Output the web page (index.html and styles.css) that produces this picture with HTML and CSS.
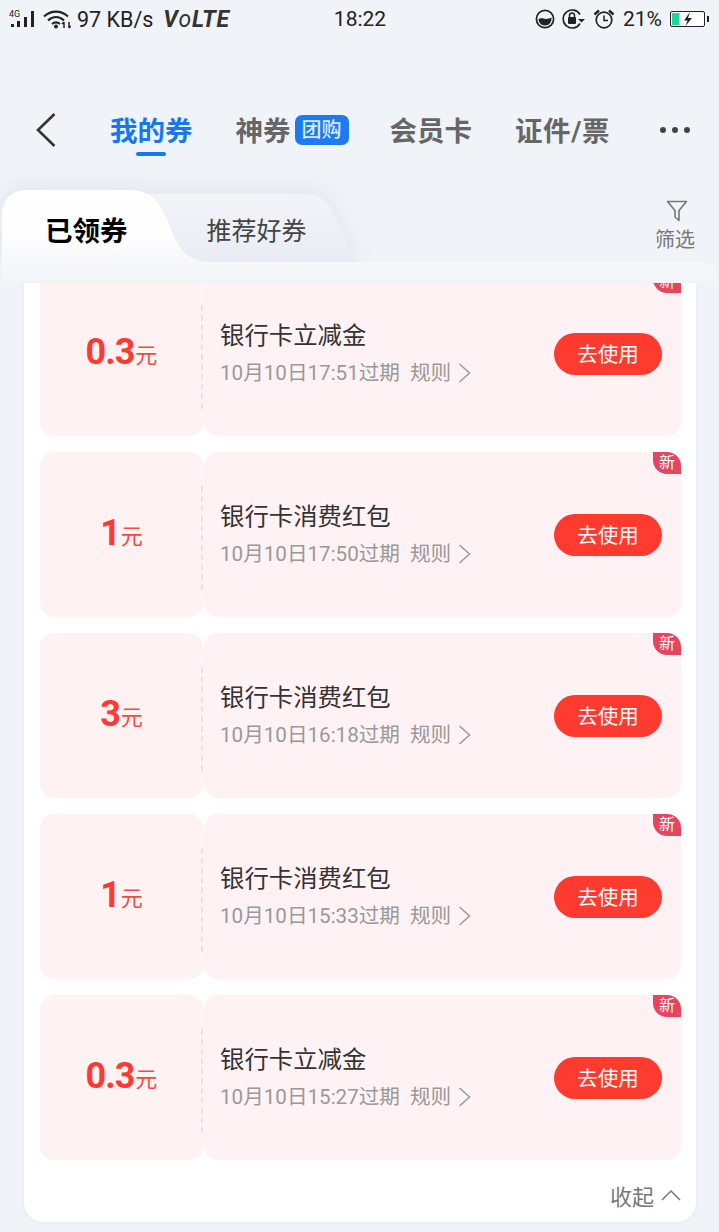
FILE: index.html
```html
<!DOCTYPE html>
<html lang="zh-CN">
<head>
<meta charset="utf-8">
<title>我的券</title>
<link rel="stylesheet" href="styles.css">
</head>
<body>
<div class="page">
  <header class="status">
    <div class="status-left">
      <svg class="ic-signal" width="28" height="20" viewBox="0 0 28 20">
        <text x="0" y="8" class="ic-4g">4G</text>
        <rect x="2" y="15" width="3" height="3"/><rect x="8" y="12" width="3" height="6"/><rect x="15" y="8" width="3" height="10"/><rect x="22" y="2" width="3" height="16"/>
      </svg>
      <svg class="ic-wifi" width="28" height="20" viewBox="0 0 28 20">
        <path d="M1 7.5C8 1 18 1 25 7.5M5 11.5C10 7 16 7 21 11.5M9 15C11.5 13 14.5 13 17 15" fill="none" stroke="#222" stroke-width="2.2"/>
        <circle cx="13" cy="17.5" r="2" fill="#222"/>
        <path d="M21 13v6M19 15l2-2M26 13v6M26 19l2-2" stroke="#222" stroke-width="1.5" fill="none"/>
      </svg>
      <span class="speed">97 KB/s</span>
      <span class="volte">V<span class="volte-o">o</span>LTE</span>
    </div>
    <div class="status-time">18:22</div>
    <div class="status-right">
      <svg width="20" height="20" viewBox="0 0 20 20"><circle cx="10" cy="10" r="8.6" fill="none" stroke="#222" stroke-width="1.7"/><path d="M3.5 10C7 7.5 10 12 16.5 8.5C17 13 14 16.5 10 16.5C6 16.5 3.5 13.5 3.5 10Z" fill="#222"/></svg>
      <svg width="26" height="22" viewBox="0 0 26 22"><path d="M19 15.5A9 9 0 1 1 19 6.5" fill="none" stroke="#222" stroke-width="1.6"/><path d="M17 11h7l-3.5 3.5z" fill="#222"/><rect x="7" y="9" width="8" height="7" rx="1" fill="#222"/><path d="M8.5 9V7.5a2.5 2.5 0 0 1 5 0V9" fill="none" stroke="#222" stroke-width="1.5"/></svg>
      <svg width="22" height="22" viewBox="0 0 22 22"><circle cx="11" cy="12" r="7.8" fill="none" stroke="#222" stroke-width="1.7"/><path d="M11 7.5V12.5H15" fill="none" stroke="#222" stroke-width="1.5"/><path d="M1.5 6.5L6 2.5M20.5 6.5L16 2.5" stroke="#222" stroke-width="2.4"/></svg>
      <span class="battery-pct">21%</span>
      <svg width="40" height="18" viewBox="0 0 40 18"><rect x="0.5" y="1.5" width="34" height="15" rx="1.5" fill="#fff" stroke="#222"/><rect x="2" y="3" width="7.5" height="12" fill="#1fd69a"/><path d="M20 2L14 10.5H17.5L15.5 16L22 8H18Z" fill="#222"/><rect x="37" y="6" width="2" height="6" fill="#222"/></svg>
    </div>
  </header>

  <nav class="nav">
    <svg class="back" width="22" height="36" viewBox="0 0 22 36"><path d="M19.5 2L3 18L19.5 34" fill="none" stroke="#333" stroke-width="2.6"/></svg>
    <div class="nav-item nav-active">我的券</div>
    <div class="nav-item nav-group">神券<span class="nav-badge">团购</span></div>
    <div class="nav-item">会员卡</div>
    <div class="nav-item nav-cert">证件/票</div>
    <div class="nav-more"><i></i><i></i><i></i></div>
  </nav>

  <section class="subtabs">
    <svg class="subtabs-bg" width="400" height="72" viewBox="0 0 400 72">
      <defs>
        <linearGradient id="tabA" x1="0" y1="0" x2="0" y2="1"><stop offset="0" stop-color="#ffffff"/><stop offset="0.7" stop-color="#fdfdfe"/><stop offset="1" stop-color="#f7f8fb"/></linearGradient>
        <linearGradient id="tabB" x1="0" y1="0" x2="0" y2="1"><stop offset="0" stop-color="#f2f4f8"/><stop offset="1" stop-color="#e9ecf3"/></linearGradient>
      </defs>
      <path d="M130 4H306C322 4 329 13 335 26C342 42 348 60 358 72H130Z" fill="url(#tabB)"/>
      <path d="M2 72V26C2 11 10 0 26 0H130C150 0 160 12 168 32C176 52 182 72 212 72Z" fill="url(#tabA)"/>
    </svg>
    <div class="subtab subtab-active">已领券</div>
    <div class="subtab subtab-other">推荐好券</div>
    <div class="filter">
      <svg width="22" height="22" viewBox="0 0 22 22"><path d="M1.5 1.5H20.5L13 10.5V20.5L9 17V10.5Z" fill="none" stroke="#777" stroke-width="1.6" stroke-linejoin="round"/></svg>
      <span>筛选</span>
    </div>
  </section>

  <main class="panel">
    <div class="panel-head"></div>
    <div class="card">
      <div class="list">
        <article class="coupon">
          <div class="coupon-left"><span class="amount">0.3</span><span class="unit">元</span></div>
          <div class="coupon-right">
            <div class="coupon-info"><div class="coupon-title">银行卡立减金</div><div class="coupon-meta"><span>10月10日17:51过期</span><span class="rule">规则</span><svg class="chev" width="13" height="20" viewBox="0 0 13 20"><path d="M1.5 1L11.5 10L1.5 19" fill="none" stroke="#999" stroke-width="1.5"/></svg></div></div>
            <button class="use">去使用</button><span class="new">新</span>
          </div>
        </article>
        <article class="coupon">
          <div class="coupon-left"><span class="amount">1</span><span class="unit">元</span></div>
          <div class="coupon-right">
            <div class="coupon-info"><div class="coupon-title">银行卡消费红包</div><div class="coupon-meta"><span>10月10日17:50过期</span><span class="rule">规则</span><svg class="chev" width="13" height="20" viewBox="0 0 13 20"><path d="M1.5 1L11.5 10L1.5 19" fill="none" stroke="#999" stroke-width="1.5"/></svg></div></div>
            <button class="use">去使用</button><span class="new">新</span>
          </div>
        </article>
        <article class="coupon">
          <div class="coupon-left"><span class="amount">3</span><span class="unit">元</span></div>
          <div class="coupon-right">
            <div class="coupon-info"><div class="coupon-title">银行卡消费红包</div><div class="coupon-meta"><span>10月10日16:18过期</span><span class="rule">规则</span><svg class="chev" width="13" height="20" viewBox="0 0 13 20"><path d="M1.5 1L11.5 10L1.5 19" fill="none" stroke="#999" stroke-width="1.5"/></svg></div></div>
            <button class="use">去使用</button><span class="new">新</span>
          </div>
        </article>
        <article class="coupon">
          <div class="coupon-left"><span class="amount">1</span><span class="unit">元</span></div>
          <div class="coupon-right">
            <div class="coupon-info"><div class="coupon-title">银行卡消费红包</div><div class="coupon-meta"><span>10月10日15:33过期</span><span class="rule">规则</span><svg class="chev" width="13" height="20" viewBox="0 0 13 20"><path d="M1.5 1L11.5 10L1.5 19" fill="none" stroke="#999" stroke-width="1.5"/></svg></div></div>
            <button class="use">去使用</button><span class="new">新</span>
          </div>
        </article>
        <article class="coupon">
          <div class="coupon-left"><span class="amount">0.3</span><span class="unit">元</span></div>
          <div class="coupon-right">
            <div class="coupon-info"><div class="coupon-title">银行卡立减金</div><div class="coupon-meta"><span>10月10日15:27过期</span><span class="rule">规则</span><svg class="chev" width="13" height="20" viewBox="0 0 13 20"><path d="M1.5 1L11.5 10L1.5 19" fill="none" stroke="#999" stroke-width="1.5"/></svg></div></div>
            <button class="use">去使用</button><span class="new">新</span>
          </div>
        </article>
      </div>
      <div class="collapse"><span>收起</span><svg width="20" height="12" viewBox="0 0 20 12"><path d="M1 11L10 2L19 11" fill="none" stroke="#777" stroke-width="1.5"/></svg></div>
    </div>
  </main>
</div>
</body>
</html>
```
FILE: styles.css
```css
* { box-sizing: border-box; }
html, body { margin: 0; padding: 0; }
body {
  width: 719px;
  height: 1232px;
  overflow: hidden;
  background: #f0f3f8;
  font-family: "Roboto", "Noto Sans CJK SC", sans-serif;
}
.page { width: 719px; height: 1232px; overflow: hidden; background: #f0f3f8; }

/* status bar */
.status {
  height: 40px;
  display: flex;
  align-items: center;
  padding: 0 9px 2px 9px;
  color: #222;
  font-size: 21.5px;
}
.status-left, .status-right { display: flex; align-items: center; }
.status-left { width: 321px; flex: none; }
.status-right { flex: 1; justify-content: flex-end; gap: 6px; }
.ic-signal { fill: #222; margin-right: 6px; }
.ic-4g { font-size: 9px; font-family: "Roboto", sans-serif; }
.speed { margin-left: 6px; white-space: nowrap; }
.volte { margin-left: 10px; font-size: 23px; font-style: italic; font-weight: 700; letter-spacing: 0.6px; color: #333; white-space: nowrap; }
.volte-o { font-weight: 400; }
.status-time { font-size: 21px; width: 60px; text-align: center; flex: none; }
.battery-pct { margin: 0 2px 0 2px; font-size: 21px; }

/* top nav */
.nav {
  height: 40px;
  margin: 70px 0 40px;
  padding-left: 35px;
  display: flex;
  align-items: center;
  color: #666;
  font-size: 27.5px;
  font-weight: 700;
}
.back { margin-right: 53px; }
.nav-item { line-height: 44px; margin-right: 43px; white-space: nowrap; position: relative; top: 2px; }
.nav-active { color: #1677f0; }
.nav-active::after {
  content: "";
  position: absolute;
  left: 26px;
  bottom: -2px;
  width: 30px;
  height: 4px;
  border-radius: 2px;
  background: #1677f0;
}
.nav-group { display: flex; align-items: center; margin-right: 41px; }
.nav-cert { letter-spacing: 0.6px; }
.nav-badge {
  margin-left: 4px;
  width: 54px;
  height: 30px;
  border-radius: 7px;
  background: #1d7bf0;
  color: #d9ebff;
  font-size: 20px;
  font-weight: 500;
  line-height: 30px;
  text-align: center;
  position: relative;
  top: -2px;
}
.nav-more { display: flex; gap: 6px; margin-left: 7px; }
.nav-more i { width: 6px; height: 6px; border-radius: 50%; background: #444; }

/* secondary tabs */
.subtabs {
  height: 72px;
  position: relative;
  display: flex;
  align-items: center;
  font-size: 25px;
}
.subtabs-bg { position: absolute; left: 0; top: 0; filter: drop-shadow(0 -3px 10px rgba(196, 203, 222, 0.35)); }
.subtab { position: relative; white-space: nowrap; line-height: 40px; margin-top: 12px; }
.subtab-active { margin-left: 45px; color: #000; font-size: 27.5px; font-weight: 700; }
.subtab-other { margin-left: 79px; color: #444; }
.filter {
  position: relative;
  margin-left: auto;
  margin-right: 24px;
  display: flex;
  flex-direction: column;
  align-items: center;
  gap: 4px;
  color: #777;
  font-size: 20px;
  line-height: 28px;
}
.filter svg { display: block; margin-left: 4px; margin-top: 2px; }

/* panel */
.panel { position: relative; }
.panel-head {
  height: 21px;
  margin-left: 2px;
  border-radius: 0 20px 0 0;
  background: linear-gradient(#f7f8fb, #f2f4f8);
}
.card {
  margin-left: 24px;
  width: 672px;
  height: 939px;
  background: #fff;
  border-radius: 0 0 20px 20px;
  overflow: hidden;
  padding: 0 15px 0 16px;
  box-shadow: 0 1px 3px rgba(220, 226, 240, 0.4);
}
.list { margin-top: -12px; display: flex; flex-direction: column; gap: 16px; }

.coupon { height: 165px; display: flex; gap: 1px; }
.coupon-left {
  width: 163px;
  background: #fff2f3;
  border-radius: 14px;
  display: flex;
  align-items: baseline;
  justify-content: center;
  padding-top: 59px;
  position: relative;
  color: #ff3b30;
}
.coupon-left::after {
  content: "";
  position: absolute;
  right: 0;
  top: 34px;
  height: 104px;
  border-right: 2px dashed #f3dde0;
}
.amount { font-size: 36px; font-weight: 700; line-height: 44px; letter-spacing: -1px; }
.unit { font-size: 22px; margin-left: 1px; color: #f04b44; position: relative; top: -1px; }
.coupon-right {
  flex: 1;
  background: #fff2f4;
  border-radius: 14px;
  position: relative;
  overflow: hidden;
  display: flex;
  align-items: center;
  justify-content: space-between;
  padding: 0 19px 0 16px;
}
.coupon-info { margin-top: -1px; }
.coupon-title { font-size: 24.4px; line-height: 34px; color: #333; white-space: nowrap; }
.coupon-meta {
  margin-top: 5px;
  display: flex;
  align-items: center;
  font-size: 20.6px;
  line-height: 30px;
  color: #999;
  white-space: nowrap;
}
.rule { margin-left: 10px; }
.chev { margin-left: 7px; }
.use {
  width: 108px;
  height: 42px;
  border: 0;
  border-radius: 21px;
  background: #ff3b2f;
  color: #fff;
  font-family: inherit;
  font-size: 20.5px;
  padding: 2px 0 0;
  line-height: 40px;
}
.new {
  position: absolute;
  top: 0;
  right: 0;
  width: 28px;
  height: 22px;
  background: #e6455f;
  color: #fff;
  font-size: 16px;
  line-height: 21px;
  text-align: center;
  border-radius: 0 0 0 14px;
}
.collapse {
  height: 62px;
  display: flex;
  align-items: center;
  justify-content: flex-end;
  gap: 7px;
  color: #777;
  font-size: 22px;
  padding: 7px 0 0 0;
}
```
